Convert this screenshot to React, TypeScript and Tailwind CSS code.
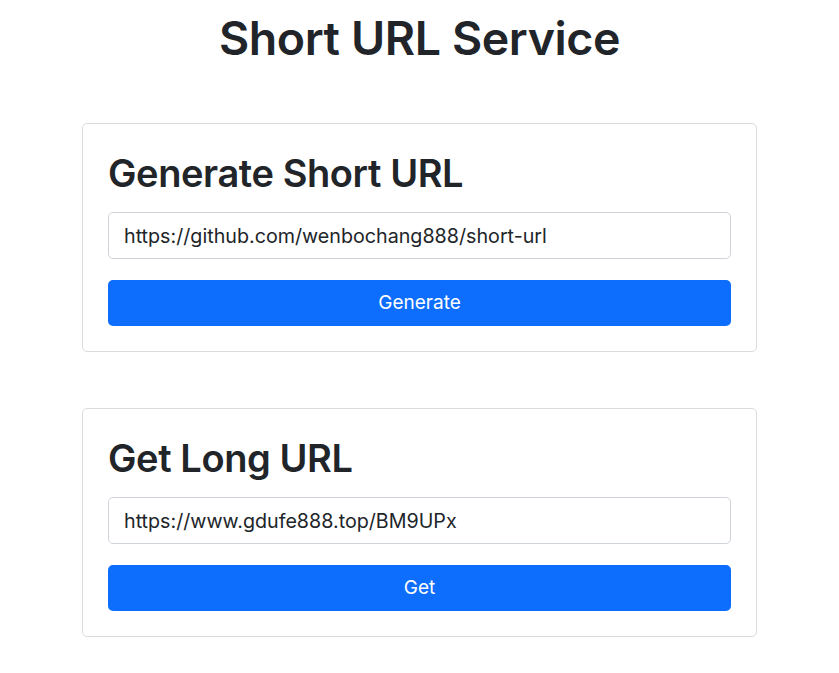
import React from "react";

function Card({ title, value, button }: { title: string; value: string; button: string }) {
  return (
    <div className="border border-[#dcdcdc] rounded-[5px] bg-white p-[25px] flex flex-col">
      <h2 className="text-[38px] leading-[48px] font-semibold text-[#212529] tracking-[-0.4px]">{title}</h2>
      <input
        readOnly
        value={value}
        className="mt-[15px] h-[47px] w-full rounded-[5px] border border-[#ced4da] px-[15px] text-[19.7px] text-[#212529] outline-none"
        style={{ fontFamily: "Inter, 'Noto Sans', sans-serif" }}
      />
      <button className="mt-[21px] h-[46px] w-full rounded-[5px] bg-[#0d6efd] text-white text-[19px]">
        {button}
      </button>
    </div>
  );
}

export default function App() {
  return (
    <div className="min-h-[673px] bg-white" style={{ fontFamily: "Inter, 'Noto Sans', sans-serif" }}>
      <h1 className="pt-[10px] text-center text-[46.5px] leading-[56px] font-semibold text-[#212529] tracking-[-0.4px]">
        Short URL Service
      </h1>
      <div className="w-[675px] mx-auto mt-[57px] flex flex-col gap-[56px]">
        <Card title="Generate Short URL" value="https://github.com/wenbochang888/short-url" button="Generate" />
        <Card title="Get Long URL" value="https://www.gdufe888.top/BM9UPx" button="Get" />
      </div>
    </div>
  );
}
